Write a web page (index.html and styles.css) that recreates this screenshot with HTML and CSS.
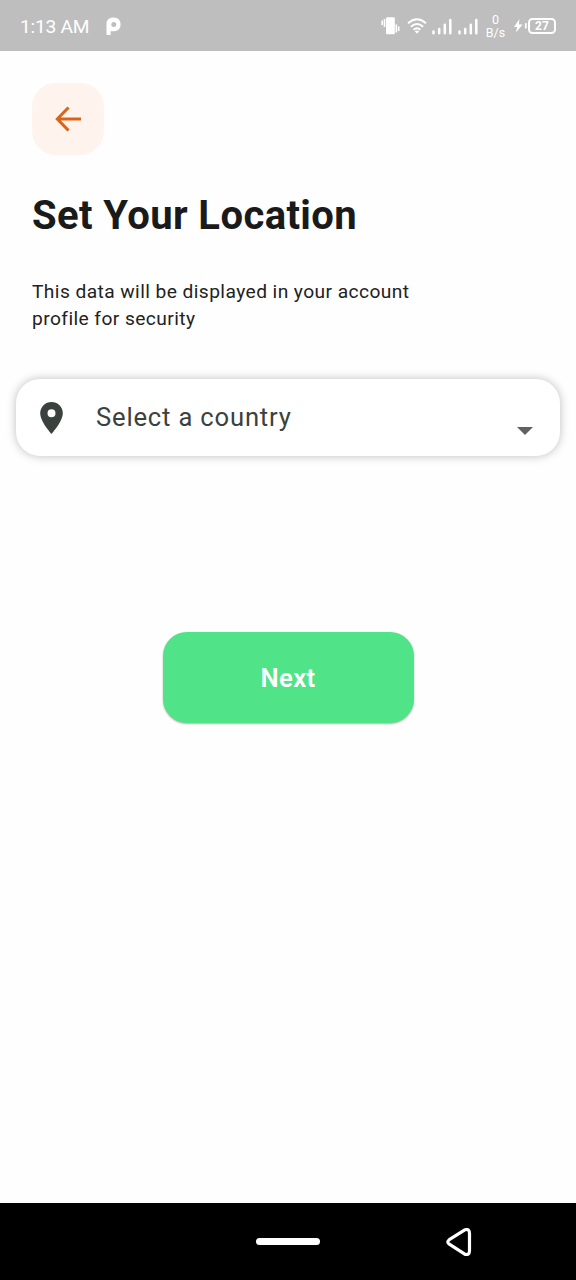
FILE: index.html
```html
<!DOCTYPE html>
<html lang="en">
<head>
<meta charset="utf-8">
<title>Set Your Location</title>
<link rel="stylesheet" href="styles.css">
</head>
<body>
<div class="screen">
  <header class="status">
    <span class="clock">1:13 AM</span>
    <svg class="app-mark" width="15" height="19" viewBox="0 0 15 19"><path fill="#fff" fill-rule="evenodd" d="M7.500 .5C3 .5 .5 3 .5 7V17.500Q.5 18 1 18H4Q4.600 18 4.600 17.400V14.200H8.500C12.500 14.200 14.600 11 14.600 7.300C14.600 3.300 12 .5 7.500 .5zM7.800 5a2.500 2.500 0 1 1 0 5a2.500 2.500 0 0 1 0-5z"/></svg>
    <svg class="vibrate" width="19" height="18" viewBox="0 0 19 18"><rect x="5" y=".3" width="8.800" height="17" rx="1.200" fill="#fff"/><path d="M1.200 3.500v4.500M3.500 2v8M15.300 7.500v8M17.700 9.500v4.500" stroke="#fff" stroke-width="1.600" fill="none"/></svg>
    <svg class="wifi" width="20" height="16" viewBox="0 0 20 16"><g fill="none" stroke="#fff" stroke-width="2"><path d="M1 5.200Q10-2.800 19 5.200"/><path d="M3.900 8.700Q10 3.200 16.100 8.700"/><path d="M6.600 11.700Q10 8.800 13.400 11.700"/></g><path d="M7.800 13.200Q10 11.800 12.200 13.200L10 15.800z" fill="#fff"/></svg>
    <svg class="signal" width="20" height="17" viewBox="0 0 20 17"><path d="M1.500 13.500v1.700M7.200 11v4.200M12.800 6.800v8.400M18.300 2v13.200" stroke="#fff" stroke-width="2.500" stroke-linecap="round"/></svg>
    <svg class="signal second" width="20" height="17" viewBox="0 0 20 17"><path d="M1.500 13.500v1.700M7.200 11v4.200M12.800 6.800v8.400M18.300 2v13.200" stroke="#fff" stroke-width="2.500" stroke-linecap="round"/></svg>
    <span class="rate"><span>0</span><span>B/s</span></span>
    <svg class="bolt" width="13" height="14" viewBox="0 0 13 14"><path fill="#fff" d="M5.500 0L0 8h3L2 13.500L8.500 5.500H4.800z"/><path d="M11.800 4.200v5.200" stroke="#fff" stroke-width="1.800"/></svg>
    <span class="battery">27</span>
  </header>
  <main class="content">
    <button class="back" aria-label="Back"><svg width="26" height="26" viewBox="0 0 26 26"><path d="M26 13H2.500M13.500 1.500L2.300 13L13.500 24.500" fill="none" stroke="#da6317" stroke-width="3"/></svg></button>
    <h1 class="title">Set Your Location</h1>
    <p class="intro">This data will be displayed in your account<br>profile for security</p>
    <div class="select">
      <svg class="pin" width="23" height="32" viewBox="0 0 23 32"><path fill="#3b413c" fill-rule="evenodd" d="M11.500 0A11.300 11.300 0 0 0 .2 11.300C.2 19.700 11.500 32 11.500 32S22.800 19.700 22.800 11.300A11.300 11.300 0 0 0 11.500 0zM11.500 7.300a4 4 0 1 1 0 8a4 4 0 0 1 0-8z"/></svg>
      <span class="placeholder">Select a country</span>
      <svg class="caret" width="16" height="8" viewBox="0 0 16 8"><path d="M0 0h16L8 8z" fill="#616161"/></svg>
    </div>
    <button class="next">Next</button>
  </main>
  <nav class="navbar">
    <span class="home"></span>
    <svg class="nav-back" width="26" height="28" viewBox="0 0 26 28"><path d="M18.400 2.100L3.300 11.700Q.3 14 3.300 16.200L18.400 25.900Q23.500 28 23.500 22.500V5.500Q23.500 0 18.400 2.100z" fill="none" stroke="#fff" stroke-width="3.200" stroke-linejoin="round"/></svg>
  </nav>
</div>
</body>
</html>
```
FILE: styles.css
```css
* { box-sizing: border-box; }
body { margin: 0; font-family: Roboto, "Liberation Sans", sans-serif; background: #fefefe; }
button { border: 0; padding: 0; font-family: inherit; }
svg { display: block; flex: none; }
.screen { width: 576px; height: 1280px; display: flex; flex-direction: column; overflow: hidden; }
.status { height: 51px; flex: none; display: flex; align-items: center; padding: 1px 20px 0; background: #bebebe; color: #fff; }
.clock { width: 86px; font-size: 19.2px; letter-spacing: -.25px; white-space: nowrap; }
.vibrate { margin-left: 260px; }
.wifi { margin-left: 7px; }
.signal { margin-left: 5px; }
.second { margin-left: 6px; }
.rate { width: 21px; margin-left: 7px; display: flex; flex-direction: column; align-items: center; font-size: 12.5px; line-height: 13px; }
.bolt { margin-left: 8px; }
.battery { width: 28px; height: 16px; margin-left: 1px; border: 2px solid #fff; border-radius: 4.5px; font-size: 12px; font-weight: 700; line-height: 12px; text-align: center; }
.content { flex: 1; display: flex; flex-direction: column; align-items: flex-start; padding: 32px 16px 0; }
.back { width: 72px; height: 72px; margin-left: 16px; display: flex; align-items: center; justify-content: center; border-radius: 24px; background: #fef4ed; }
.title { margin: 37px 0 0 16px; font-size: 40px; line-height: 48px; letter-spacing: .4px; color: #1a1a1a; }
.intro { margin: 38px 0 0 16px; font-size: 19.2px; line-height: 27px; letter-spacing: .42px; color: #222; }
.select { width: 544px; height: 77px; margin-top: 47px; display: flex; align-items: center; padding: 0 27px 0 24px; border-radius: 24px; background: #fff; box-shadow: 0 0 10px rgba(0, 0, 0, .26); }
.placeholder { margin-left: 33px; margin-top: -2px; flex: 1; font-size: 25.6px; letter-spacing: .82px; color: #3b413c; }
.caret { margin-top: 27px; }
.next { width: 251px; height: 91px; margin-top: 176px; align-self: center; border-radius: 24px; background: #50e388; color: #fff; font-size: 25.6px; font-weight: 600; letter-spacing: .4px; box-shadow: 0 1px 2px rgba(0, 0, 0, .3); }
.navbar { height: 77px; flex: none; display: flex; align-items: center; padding-left: 256px; background: #000; }
.home { width: 64px; height: 7px; border-radius: 4px; background: #fff; }
.nav-back { margin-left: 126px; }
```
